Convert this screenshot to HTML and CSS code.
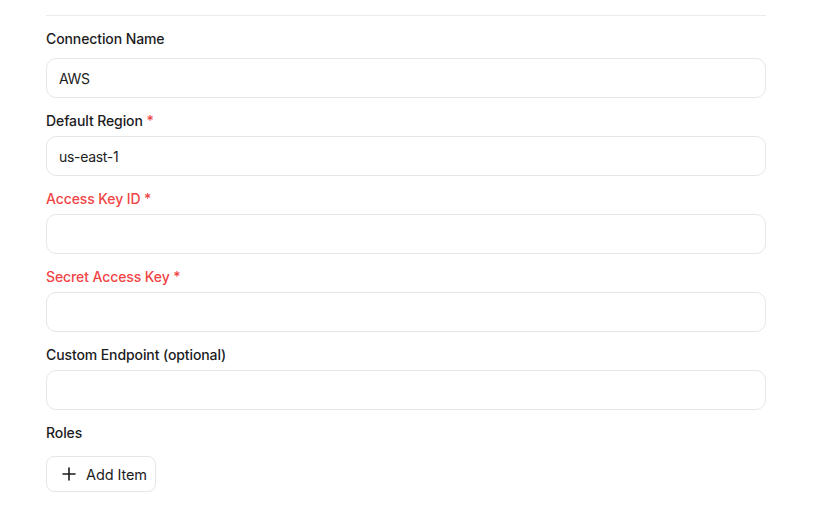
FILE: index.html
```html
<!DOCTYPE html>
<html lang="en">
<head>
<meta charset="utf-8">
<title>AWS Connection</title>
<link rel="stylesheet" href="styles.css">
</head>
<body>
<div class="form">
  <div class="divider"></div>
  <div class="field first">
    <label class="label">Connection Name</label>
    <div class="input">AWS</div>
  </div>
  <div class="field">
    <label class="label">Default Region <span class="req">*</span></label>
    <div class="input">us-east-1</div>
  </div>
  <div class="field">
    <label class="label error">Access Key ID <span class="req">*</span></label>
    <div class="input"></div>
  </div>
  <div class="field">
    <label class="label error">Secret Access Key <span class="req">*</span></label>
    <div class="input"></div>
  </div>
  <div class="field">
    <label class="label">Custom Endpoint (optional)</label>
    <div class="input"></div>
  </div>
  <div class="field roles">
    <label class="label">Roles</label>
    <button class="add-btn" type="button">
      <svg class="plus" width="14" height="14" viewBox="0 0 14 14" fill="none" stroke="currentColor" stroke-width="1.6" stroke-linecap="round"><path d="M7 1v12M1 7h12"/></svg>
      <span>Add Item</span>
    </button>
  </div>
</div>
</body>
</html>
```
FILE: styles.css
```css
* { box-sizing: border-box; }
html, body { margin: 0; padding: 0; background: #ffffff; }
body {
  font-family: Inter, "Liberation Sans", sans-serif;
  color: #1c1c1e;
  font-size: 14px;
}
.form {
  width: 720px;
  margin-left: 46px;
  padding-top: 15px;
  display: flex;
  flex-direction: column;
}
.divider {
  height: 1px;
  background: #ebebeb;
  margin-bottom: 12px;
}
.field {
  display: flex;
  flex-direction: column;
  margin-bottom: 12px;
}
.label {
  font-size: 14px;
  font-weight: 500;
  line-height: 22px;
  margin-bottom: 4px;
  color: #1c1c1e;
  letter-spacing: -0.1px;
}
.field.first .label { margin-bottom: 8px; }
.label.error { color: #f04545; }
.req { color: #f04545; }
.input {
  height: 40px;
  border: 1px solid #e6e6e6;
  border-radius: 10px;
  padding: 0 12px;
  display: flex;
  align-items: center;
  font-size: 14px;
  color: #1c1c1e;
  letter-spacing: -0.3px;
}
.roles .label { margin-bottom: 12px; }
.add-btn {
  align-self: flex-start;
  height: 36px;
  width: 110px;
  border: 1px solid #e6e6e6;
  border-radius: 8px;
  background: #ffffff;
  display: flex;
  align-items: center;
  gap: 10px;
  padding: 0 0 0 15px;
  font-family: Inter, "Liberation Sans", sans-serif;
  font-size: 14.5px;
  font-weight: 400;
  color: #1c1c1e;
  letter-spacing: -0.1px;
  cursor: pointer;
}
.plus { flex: none; }
```
